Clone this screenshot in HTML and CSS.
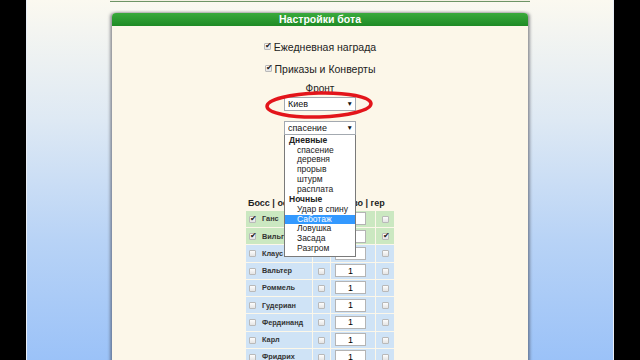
FILE: index.html
```html
<!DOCTYPE html>
<html lang="ru">

<head>
    <meta charset="UTF-8">
    <meta name="viewport" content="width=device-width, initial-scale=1.0">
    <title>Настройки бота</title>
    <link rel="stylesheet" href="styles.css">
</head>

<body>
    <div class="screen">
        <div class="prev-panel"></div>

        <div class="panel">
            <div class="panel-head">Настройки бота</div>
            <div class="panel-body">
                <label class="opt"><input type="checkbox" checked> Ежедневная награда</label>
                <label class="opt"><input type="checkbox" checked> Приказы и Конверты</label>

                <div class="front">
                    <div class="front-label">Фронт</div>
                    <div class="select-wrap">
                        <select class="select">
                            <option>Киев</option>
                        </select>
                        <span class="arrow">&#9660;</span>
                        <!-- hand drawn mark from the video -->
                        <svg class="circle" width="112" height="38" viewBox="0 0 112 38">
                            <ellipse cx="56" cy="19" rx="52" ry="12" fill="none" stroke="#e3151b" stroke-width="3.5" transform="rotate(-1.5 56 19)" />
                        </svg>
                    </div>

                    <div class="select-wrap mission">
                        <select class="select">
                            <option>спасение</option>
                        </select>
                        <span class="arrow">&#9660;</span>

                        <div class="dropdown">
                            <div class="group">Дневные</div>
                            <div class="item">спасение</div>
                            <div class="item">деревня</div>
                            <div class="item">прорыв</div>
                            <div class="item">штурм</div>
                            <div class="item">расплата</div>
                            <div class="group">Ночные</div>
                            <div class="item">Удар в спину</div>
                            <div class="item active">Саботаж</div>
                            <div class="item">Ловушка</div>
                            <div class="item">Засада</div>
                            <div class="item">Разгром</div>
                        </div>
                    </div>
                </div>

                <table class="bosses">
                    <colgroup>
                        <col class="c-name">
                        <col class="c-mid">
                        <col class="c-count">
                        <col class="c-hero">
                    </colgroup>
                    <thead>
                        <tr>
                            <th colspan="4">Босс | основ | количество | гер</th>
                        </tr>
                    </thead>
                    <tbody id="rows"></tbody>
                </table>
            </div>
        </div>
    </div>

    <script>
        const bosses = [
            { name: 'Ганс', on: true, hero: false },
            { name: 'Вильгельм', on: true, hero: true },
            { name: 'Клаус' },
            { name: 'Вальтер' },
            { name: 'Роммель' },
            { name: 'Гудериан' },
            { name: 'Фердинанд' },
            { name: 'Карл' },
            { name: 'Фридрих' }
        ];

        const tbody = document.getElementById('rows');

        bosses.forEach(function (b) {
            const tr = document.createElement('tr');
            tr.className = b.on ? 'on' : 'off';
            tr.innerHTML =
                '<td class="name"><input type="checkbox"' + (b.on ? ' checked' : '') + '> ' + b.name + '</td>' +
                '<td class="mid"><input type="checkbox"></td>' +
                '<td class="count"><input type="text" value="1"></td>' +
                '<td class="mid"><input type="checkbox"' + (b.hero ? ' checked' : '') + '></td>';
            tbody.appendChild(tr);
        });
    </script>
</body>

</html>
```

FILE: styles.css
```css
body {
    margin: 0;
    background: #000;
    font-family: 'Liberation Sans', Arial, sans-serif;
    color: #222;
    display: flex;
    justify-content: center;
}

.screen {
    width: 588px;
    height: 360px;
    overflow: hidden;
    background: linear-gradient(#fbf9f0 0px, #dee9f4 120px, #b8d3f6 240px, #9bc2f8 360px);
    border-left: 1px solid #e8eef6;
    border-right: 1px solid #e8eef6;
    box-sizing: border-box;
}

.prev-panel {
    width: 420px;
    height: 1px;
    margin: 0 auto;
    background: #f4f1e4;
    border-bottom: 1px solid #6e9466;
}

.panel {
    width: 416px;
    margin: 11px auto 0;
    box-shadow: -2px 0 3px rgba(60, 60, 70, 0.5), 2px 0 3px rgba(60, 60, 70, 0.5);
    border-radius: 4px 4px 0 0;
}

.panel-head {
    height: 13px;
    line-height: 13px;
    background: linear-gradient(#3aaa3c, #1f8b25);
    border-radius: 4px 4px 0 0;
    color: #fff;
    font-weight: bold;
    font-size: 10.5px;
    text-align: center;
}

.panel-body {
    background: #fcf7e9;
    height: 340px;
    padding-top: 14px;
    display: flex;
    flex-direction: column;
    align-items: center;
    box-sizing: border-box;
}

.opt {
    display: flex;
    align-items: center;
    gap: 3px;
    height: 14px;
    font-size: 10.5px;
    margin-bottom: 8px;
}

input[type="checkbox"] {
    appearance: none;
    width: 7px;
    height: 7px;
    margin: 0;
    border: 1px solid #b9b9b9;
    border-radius: 1px;
    background: linear-gradient(#fdfdfd, #e4e4e4);
    position: relative;
    vertical-align: middle;
}

input[type="checkbox"]:checked::after {
    content: '\2714';
    position: absolute;
    left: 0;
    top: -3px;
    font-size: 8px;
    color: #222;
}

.front {
    display: flex;
    flex-direction: column;
    align-items: center;
}

.front-label {
    font-size: 10px;
    line-height: 11px;
    margin-top: -1px;
    margin-bottom: 3px;
}

.select-wrap {
    position: relative;
    width: 72px;
    height: 14px;
}

.select {
    appearance: none;
    display: block;
    box-sizing: border-box;
    width: 72px;
    height: 14px;
    line-height: 12px;
    margin: 0;
    padding: 0 0 0 3px;
    border: 1px solid #a3a9b0;
    border-radius: 0;
    background: #fff;
    font-family: inherit;
    font-size: 9px;
    color: #111;
}

.arrow {
    position: absolute;
    right: 3px;
    top: 3px;
    font-size: 6.5px;
    line-height: 8px;
    color: #111;
}

.circle {
    position: absolute;
    left: -21px;
    top: -11px;
}

.mission {
    margin-top: 10px;
}

.dropdown {
    position: absolute;
    left: 0;
    top: 14px;
    width: 72px;
    box-sizing: border-box;
    background: #fff;
    border: 1px solid #7a7a7a;
    border-top: none;
    padding: 1px 0 2px;
    font-size: 8.5px;
    line-height: 9.85px;
    z-index: 2;
}

.group {
    font-weight: bold;
    padding-left: 4px;
}

.item {
    padding-left: 12px;
}

.item.active {
    background: #3399ff;
    color: #fff;
}

.bosses {
    margin-top: 61px;
    width: 150px;
    table-layout: fixed;
    border-spacing: 1px;
}

.c-name {
    width: 66px;
}

.c-mid {
    width: 17px;
}

.c-count {
    width: 44px;
}

.c-hero {
    width: 18px;
}

.bosses th {
    height: 13px;
    padding: 0 0 0 2px;
    text-align: left;
    white-space: nowrap;
    font-size: 9px;
}

.bosses td {
    height: 16.25px;
    padding: 0;
    font-size: 7.3px;
    font-weight: bold;
    color: #333;
    text-align: center;
}

.bosses tr.on td {
    background: #cbe8c1;
}

.bosses tr.off td {
    background: #cfe3f6;
}

.bosses td.name {
    text-align: left;
    padding-left: 3px;
    white-space: nowrap;
    overflow: hidden;
}

.bosses td.name input {
    margin-right: 4px;
}

.bosses td.count {
    text-align: left;
    padding-left: 4px;
}

.count input {
    display: block;
    width: 31px;
    height: 13px;
    box-sizing: border-box;
    margin: 0;
    border: 1px solid #b4b4b4;
    background: #fff;
    text-align: center;
    font-family: inherit;
    font-size: 9px;
    font-weight: normal;
    padding: 0;
}
```
